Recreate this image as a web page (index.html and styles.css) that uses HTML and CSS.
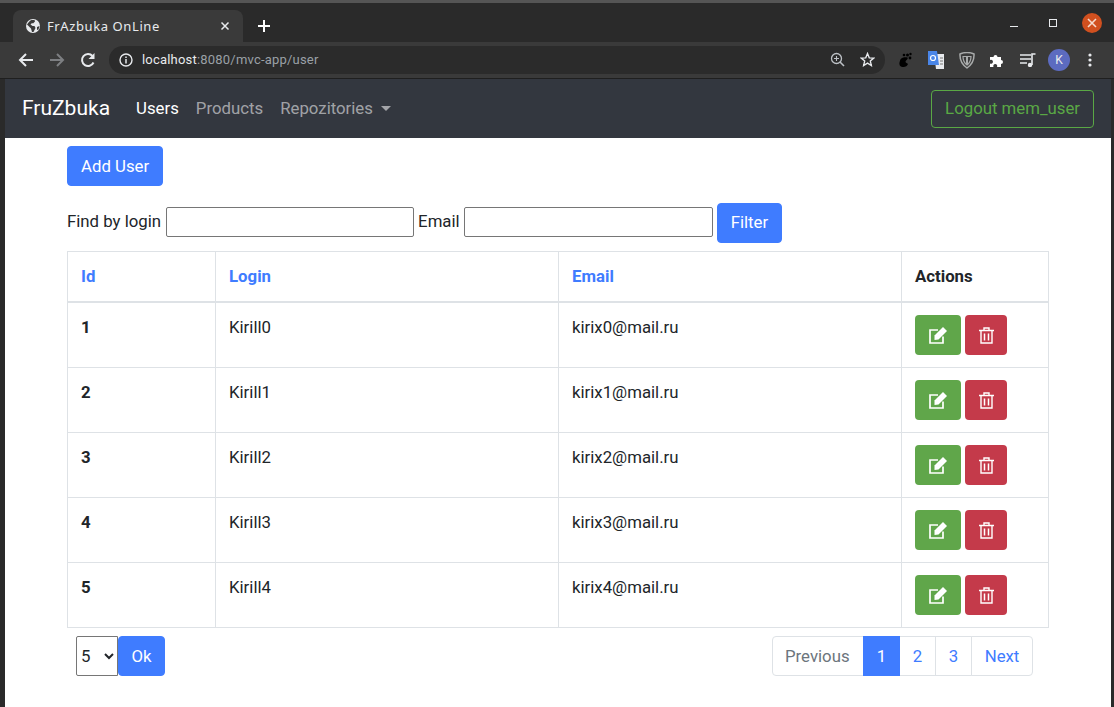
FILE: index.html
```html
<!DOCTYPE html>
<html lang="en">
<head>
    <meta charset="UTF-8">
    <title>FrAzbuka OnLine</title>
    <link rel="stylesheet" href="styles.css">
</head>
<body>
    <div class="window">
        <div class="tabstrip">
            <div class="tab">
                <svg class="globe" width="16" height="16" viewBox="0 0 16 16"><circle cx="8" cy="8" r="7" fill="#e8eaed"/><path d="M2 6.500 C4 4 5 2.500 6.500 2 L9.500 2 L10 3.500 L8 5.500 L7 5 L5.500 6.500 L7.500 8 L9.500 8 L10.500 10 L8.500 14 L7 14 L6 10.500 Z M12 9 L14.500 8 L13.500 11.500 L12 12 Z" fill="#3b3b3b"/></svg>
                <span class="tab-title">FrAzbuka OnLine</span>
                <svg class="tab-close" width="10" height="10" viewBox="0 0 10 10"><path d="M1.500 1.500 L8.500 8.500 M8.500 1.500 L1.500 8.500" stroke="#e8eaed" stroke-width="1.500"/></svg>
            </div>
            <svg class="new-tab" width="14" height="14" viewBox="0 0 14 14"><path d="M7 1 V13 M1 7 H13" stroke="#fff" stroke-width="2"/></svg>
            <div class="win-controls">
                <span class="win-min"></span>
                <span class="win-max"></span>
                <span class="win-close"><svg width="10" height="10" viewBox="0 0 10 10"><path d="M1 1 L9 9 M9 1 L1 9" stroke="#f6dccf" stroke-width="1.600"/></svg></span>
            </div>
        </div>
        <div class="toolbar">
            <svg class="nav-icon" width="16" height="16" viewBox="0 0 16 16"><path d="M15 8 H2.500 M8 2 L2 8 L8 14" fill="none" stroke="#e8eaed" stroke-width="2"/></svg>
            <svg class="nav-icon" width="16" height="16" viewBox="0 0 16 16"><path d="M1 8 H13.500 M8 2 L14 8 L8 14" fill="none" stroke="#7d7f82" stroke-width="2"/></svg>
            <svg class="nav-icon" width="16" height="16" viewBox="0 0 16 16"><path d="M13.500 10.500 A6 6 0 1 1 12.500 4" fill="none" stroke="#e8eaed" stroke-width="2"/><path d="M14.500 1 V7 H8.500 Z" fill="#e8eaed"/></svg>
            <div class="omnibox">
                <svg width="14" height="14" viewBox="0 0 14 14"><circle cx="7" cy="7" r="6" fill="none" stroke="#e8eaed" stroke-width="1.400"/><path d="M7 6 V10.500 M7 3.500 V5" stroke="#e8eaed" stroke-width="1.500"/></svg>
                <span class="url"><b>localhost</b>:8080/mvc-app/user</span>
                <svg class="zoom-icon" width="15" height="15" viewBox="0 0 15 15"><circle cx="6.500" cy="6.500" r="5" fill="none" stroke="#bdc1c6" stroke-width="1.300"/><path d="M10 10 L14 14" stroke="#bdc1c6" stroke-width="1.600"/><path d="M4 6.500 H9 M6.500 4 V9" stroke="#bdc1c6" stroke-width="1.100"/></svg>
                <svg class="star-icon" width="15" height="15" viewBox="0 0 24 24"><path d="M12 2.500 L14.800 9.300 L22 9.800 L16.500 14.500 L18.200 21.600 L12 17.800 L5.800 21.600 L7.500 14.500 L2 9.800 L9.200 9.300 Z" fill="none" stroke="#e8eaed" stroke-width="2.200"/></svg>
            </div>
            <div class="extensions">
                <svg width="14" height="16" viewBox="0 0 14 16"><path d="M2 9 C2 5.500 7 4.500 9.500 5.500 C10.500 7 8 8 7.500 9.500 C7.500 11 9.500 11 10 12 C9 15.500 4 16 1.800 13.500 C1 11.500 1.500 10 2 9 Z" fill="#000"/><circle cx="12" cy="6" r="1.400" fill="#000"/><circle cx="9.500" cy="3" r="1.500" fill="#000"/><circle cx="12.500" cy="2" r="1.200" fill="#000"/><circle cx="6" cy="3" r="1.300" fill="#000"/></svg>
                <svg width="17" height="18" viewBox="0 0 17 18"><path d="M7 3 H17 V18 H9 Z" fill="#e8eaed"/><path d="M1 0 H10 L12 14 H1 Z" fill="#4a86e8"/><circle cx="6" cy="7" r="2.500" fill="none" stroke="#fff" stroke-width="1.200"/><path d="M13 7 H16 M13 10 H16 M13 13 H16" stroke="#777" stroke-width="1.200"/></svg>
                <svg width="16" height="17" viewBox="0 0 16 17"><path d="M1 2 Q8 -1 15 2 Q15.500 11 8 16 Q0.500 11 1 2 Z" fill="none" stroke="#a9abab" stroke-width="1.500"/><path d="M4 4.500 H12 Q12 10 8 13 Q4 10 4 4.500 Z" fill="none" stroke="#a9abab" stroke-width="1.200"/><path d="M8 5 V12" stroke="#a9abab" stroke-width="2"/></svg>
                <svg width="15" height="15" viewBox="0 0 15 15"><path d="M0 4 H3.500 A2 2 0 1 1 7.500 4 H11 V7 A2 2 0 1 1 11 11 V14 H7 A2 2 0 1 0 3.500 14 H0 V10.500 A2 2 0 1 0 0 7 Z" fill="#fff"/></svg>
                <svg width="16" height="14" viewBox="0 0 16 14"><path d="M0 2 H11 M0 6 H11 M0 10 H7" stroke="#e8eaed" stroke-width="1.500"/><path d="M12 12 V1 H15.500" fill="none" stroke="#e8eaed" stroke-width="1.600"/><circle cx="10" cy="12" r="2.200" fill="#e8eaed"/></svg>
                <span class="avatar">K</span>
                <svg class="menu-dots" width="4" height="14" viewBox="0 0 4 14"><circle cx="2" cy="2" r="1.600" fill="#e8eaed"/><circle cx="2" cy="7" r="1.600" fill="#e8eaed"/><circle cx="2" cy="12" r="1.600" fill="#e8eaed"/></svg>
            </div>
        </div>
        <div class="page">
            <nav class="navbar">
                <a class="brand" href="#">FruZbuka</a>
                <a class="nav-link active" href="#">Users</a>
                <a class="nav-link" href="#">Products</a>
                <a class="nav-link" href="#">Repozitories<span class="caret"></span></a>
                <a class="logout" href="#">Logout mem_user</a>
            </nav>
            <div class="container">
                <button class="btn add-btn">Add User</button>
                <form class="filter-form">
                    <label for="login">Find by login</label>
                    <input type="text" id="login" class="login-input">
                    <label for="email">Email</label>
                    <input type="text" id="email" class="email-input">
                    <button type="submit" class="btn filter-btn">Filter</button>
                </form>
                <table>
                    <thead>
                        <tr>
                            <th class="col-id"><a href="#">Id</a></th>
                            <th class="col-text"><a href="#">Login</a></th>
                            <th class="col-text"><a href="#">Email</a></th>
                            <th>Actions</th>
                        </tr>
                    </thead>
                    <tbody>
                        <tr>
                            <th>1</th><td>Kirill0</td><td>kirix0@mail.ru</td>
                            <td class="actions">
                                <button class="btn-edit"><svg width="20" height="19" viewBox="0 0 20 19"><path d="M15 10.500 V17 H2 V4 H10" fill="none" stroke="#fff" stroke-width="1.700"/><path d="M6.500 9.500 L15 1 L19 5 L10.500 13.500 L6.500 14 Z" fill="#fff"/></svg></button><button class="btn-delete"><svg width="15" height="17" viewBox="0 0 15 17"><path d="M0 3.500 H15 M5 3.500 V1 H10 V3.500" fill="none" stroke="#fff" stroke-width="1.400"/><path d="M2 4 V16 H13 V4" fill="none" stroke="#fff" stroke-width="1.400"/><path d="M5.500 6.500 V13.500 M9.500 6.500 V13.500" stroke="#fff" stroke-width="1.500"/></svg></button>
                            </td>
                        </tr>
                        <tr>
                            <th>2</th><td>Kirill1</td><td>kirix1@mail.ru</td>
                            <td class="actions">
                                <button class="btn-edit"><svg width="20" height="19" viewBox="0 0 20 19"><path d="M15 10.500 V17 H2 V4 H10" fill="none" stroke="#fff" stroke-width="1.700"/><path d="M6.500 9.500 L15 1 L19 5 L10.500 13.500 L6.500 14 Z" fill="#fff"/></svg></button><button class="btn-delete"><svg width="15" height="17" viewBox="0 0 15 17"><path d="M0 3.500 H15 M5 3.500 V1 H10 V3.500" fill="none" stroke="#fff" stroke-width="1.400"/><path d="M2 4 V16 H13 V4" fill="none" stroke="#fff" stroke-width="1.400"/><path d="M5.500 6.500 V13.500 M9.500 6.500 V13.500" stroke="#fff" stroke-width="1.500"/></svg></button>
                            </td>
                        </tr>
                        <tr>
                            <th>3</th><td>Kirill2</td><td>kirix2@mail.ru</td>
                            <td class="actions">
                                <button class="btn-edit"><svg width="20" height="19" viewBox="0 0 20 19"><path d="M15 10.500 V17 H2 V4 H10" fill="none" stroke="#fff" stroke-width="1.700"/><path d="M6.500 9.500 L15 1 L19 5 L10.500 13.500 L6.500 14 Z" fill="#fff"/></svg></button><button class="btn-delete"><svg width="15" height="17" viewBox="0 0 15 17"><path d="M0 3.500 H15 M5 3.500 V1 H10 V3.500" fill="none" stroke="#fff" stroke-width="1.400"/><path d="M2 4 V16 H13 V4" fill="none" stroke="#fff" stroke-width="1.400"/><path d="M5.500 6.500 V13.500 M9.500 6.500 V13.500" stroke="#fff" stroke-width="1.500"/></svg></button>
                            </td>
                        </tr>
                        <tr>
                            <th>4</th><td>Kirill3</td><td>kirix3@mail.ru</td>
                            <td class="actions">
                                <button class="btn-edit"><svg width="20" height="19" viewBox="0 0 20 19"><path d="M15 10.500 V17 H2 V4 H10" fill="none" stroke="#fff" stroke-width="1.700"/><path d="M6.500 9.500 L15 1 L19 5 L10.500 13.500 L6.500 14 Z" fill="#fff"/></svg></button><button class="btn-delete"><svg width="15" height="17" viewBox="0 0 15 17"><path d="M0 3.500 H15 M5 3.500 V1 H10 V3.500" fill="none" stroke="#fff" stroke-width="1.400"/><path d="M2 4 V16 H13 V4" fill="none" stroke="#fff" stroke-width="1.400"/><path d="M5.500 6.500 V13.500 M9.500 6.500 V13.500" stroke="#fff" stroke-width="1.500"/></svg></button>
                            </td>
                        </tr>
                        <tr>
                            <th>5</th><td>Kirill4</td><td>kirix4@mail.ru</td>
                            <td class="actions">
                                <button class="btn-edit"><svg width="20" height="19" viewBox="0 0 20 19"><path d="M15 10.500 V17 H2 V4 H10" fill="none" stroke="#fff" stroke-width="1.700"/><path d="M6.500 9.500 L15 1 L19 5 L10.500 13.500 L6.500 14 Z" fill="#fff"/></svg></button><button class="btn-delete"><svg width="15" height="17" viewBox="0 0 15 17"><path d="M0 3.500 H15 M5 3.500 V1 H10 V3.500" fill="none" stroke="#fff" stroke-width="1.400"/><path d="M2 4 V16 H13 V4" fill="none" stroke="#fff" stroke-width="1.400"/><path d="M5.500 6.500 V13.500 M9.500 6.500 V13.500" stroke="#fff" stroke-width="1.500"/></svg></button>
                            </td>
                        </tr>
                    </tbody>
                </table>
                <div class="table-footer">
                    <div class="page-size">
                        <select class="size-select"><option>5</option><option>10</option></select>
                        <button class="btn ok-btn">Ok</button>
                    </div>
                    <ul class="pagination">
                        <li class="page-item disabled">Previous</li>
                        <li class="page-item page-num current">1</li>
                        <li class="page-item page-num">2</li>
                        <li class="page-item page-num">3</li>
                        <li class="page-item page-next">Next</li>
                    </ul>
                </div>
            </div>
        </div>
    </div>
</body>
</html>
```

FILE: styles.css
```css
html, body { margin: 0; height: 100%; overflow: hidden; }
body { font-family: Roboto, "Liberation Sans", sans-serif; font-size: 16.8px; color: #212529; background: #2a2a2a; }
* { box-sizing: border-box; }
a { text-decoration: none; }

.window { height: 707px; display: flex; flex-direction: column; background: #2a2a2a; border-top: 3px solid #555; padding-left: 5px; padding-right: 3px; }

.tabstrip { height: 39px; flex: none; display: flex; align-items: flex-end; margin-left: -5px; margin-right: -3px; padding-left: 13px; background: #2a2a2a; }
.tab { width: 230px; height: 32px; background: #3a3a3a; border-radius: 8px 8px 0 0; display: flex; align-items: center; padding: 0 13px 0 12px; }
.globe { flex: none; margin-top: -1px; }
.tab-title { font-family: "Noto Sans", sans-serif; font-size: 13px; color: #e8eaed; margin-left: 6px; letter-spacing: 0.6px; }
.tab-close { margin-left: auto; }
.new-tab { margin: 0 0 9px 14px; }
.win-controls { margin-left: auto; display: flex; align-items: center; height: 32px; margin-bottom: 3px; padding-right: 12px; }
.win-min { width: 8px; height: 1px; background: #e8eaed; margin-top: 6px; }
.win-max { width: 8px; height: 8px; border: 1px solid #e8eaed; margin-left: 31px; }
.win-close { width: 20px; height: 20px; border-radius: 50%; background: #d1501f; margin-left: 25px; display: flex; align-items: center; justify-content: center; }

.toolbar { height: 37px; flex: none; display: flex; align-items: center; margin-left: -5px; margin-right: -3px; padding-left: 18px; background: #3a3a3a; border-bottom: 1px solid #1f1f1f; }
.nav-icon { margin-right: 15px; flex: none; }
.nav-icon:nth-child(3) { margin-right: 13px; }
.omnibox { width: 776px; height: 28px; flex: none; display: flex; align-items: center; border-radius: 14px; background: #2b2b2b; padding: 0 10px; margin-bottom: 1px; }
.url { font-size: 13px; color: #9aa0a6; margin-left: 9px; letter-spacing: 0.2px; }
.url b { font-weight: 400; color: #e8eaed; }
.zoom-icon { margin-left: auto; margin-right: 15px; }
.extensions { flex: 1; display: flex; align-items: center; gap: 15px; padding-left: 13px; padding-right: 22px; }
.avatar { width: 22px; height: 22px; border-radius: 50%; background: #5c6bc0; color: #e8eaed; font-size: 12px; display: flex; align-items: center; justify-content: center; margin-left: -3px; }
.menu-dots { margin-left: auto; }

.page { flex: 1; background: #fff; overflow: hidden; }
.navbar { height: 59px; display: flex; align-items: center; padding: 0 17px; background: #33373f; }
.brand { font-size: 21px; color: #fff; margin-right: 26px; margin-bottom: 2px; }
.nav-link { color: rgba(255, 255, 255, .55); margin-right: 17px; margin-bottom: 2px; }
.nav-link.active { color: #fff; }
.caret { display: inline-block; margin-left: 8px; vertical-align: 3px; border-top: 5px solid; border-left: 5px solid transparent; border-right: 5px solid transparent; }
.logout { margin-left: auto; height: 38px; line-height: 35px; padding: 0 13px; border: 1px solid #5aa845; border-radius: 4px; color: #5aa845; }

.container { padding: 8px 0 0 62px; width: 1044px; }
.btn { height: 40px; padding: 0 13px; font: inherit; color: #fff; background: #3f7cff; border: 1px solid #3f7cff; border-radius: 4px; }
.add-btn { display: block; }
.filter-form { display: flex; align-items: center; gap: 4.5px; margin-top: 17px; }
.filter-form label { margin-bottom: 4px; }
.filter-form input { height: 30px; margin-bottom: 3px; border: 1px solid #767676; border-radius: 2px; padding: 1px 2px; }
.login-input { width: 248px; }
.email-input { width: 249px; }
.filter-btn { padding-bottom: 2px; margin-left: -1px; }

table { width: 982px; margin-top: 8px; border-collapse: collapse; table-layout: fixed; }
th, td { border: 1px solid #dee2e6; padding: 12px 13px; text-align: left; vertical-align: top; line-height: 24px; }
thead th { border-bottom-width: 2px; padding-bottom: 13px; }
thead a { color: #3f7cff; }
.col-id { width: 148px; }
.col-text { width: 343px; }
.actions { height: 65px; white-space: nowrap; }
.actions button { height: 40px; border: none; border-radius: 4px; vertical-align: top; padding: 0; display: inline-flex; align-items: center; justify-content: center; }
.btn-edit { width: 46px; background: #60a64a; }
.btn-delete { width: 42px; background: #c43a4a; margin-left: 4px; }

.table-footer { display: flex; justify-content: space-between; margin-top: 8px; padding: 0 16px 0 9px; width: 982px; }
.page-size { display: flex; }
.size-select { width: 42px; height: 40px; font: inherit; color: #212529; background: #fff; border: 1px solid #767676; border-radius: 2px 0 0 2px; }
.ok-btn { width: 47px; padding: 0; }
.pagination { display: flex; list-style: none; margin: 0; padding: 0; height: 40px; }
.page-item { height: 40px; line-height: 38px; padding: 0 13px; margin-left: -1px; color: #3f7cff; background: #fff; border: 1px solid #dee2e6; }
.page-item:first-child { border-radius: 4px 0 0 4px; margin-left: 0; padding-left: 12px; width: 92px; }
.page-num { width: 37px; padding: 0; text-align: center; }
.page-next { width: 62px; padding: 0; text-align: center; border-radius: 0 4px 4px 0; }
.page-item.disabled { color: #6c757d; }
.page-item.current { color: #fff; background: #3f7cff; border-color: #3f7cff; position: relative; }
```
